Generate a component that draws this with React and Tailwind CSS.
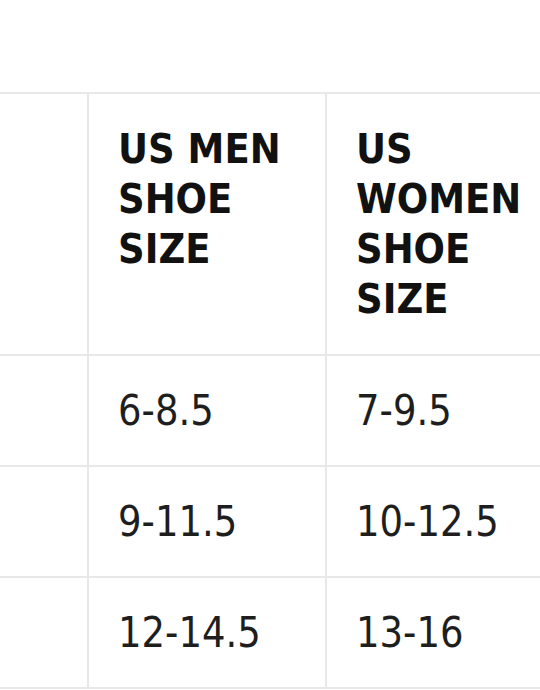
import React from 'react';

const rows = [
  ['6-8.5', '7-9.5'],
  ['9-11.5', '10-12.5'],
  ['12-14.5', '13-16'],
];

const App = () => {
  return (
    <div className="w-[540px] h-[690px] overflow-hidden bg-white pt-[92px] font-['DejaVu_Sans',sans-serif]">
      <div className="grid grid-cols-[89px_238px_1fr] w-[560px] border-t-2 border-[#e8e8e8]">
        {/* header */}
        <div className="h-[262px] border-r-2 border-b-2 border-[#e8e8e8]" />
        <div className="h-[262px] border-r-2 border-b-2 border-[#e8e8e8] pl-[29px] pt-[30px] text-[37px] font-bold text-[#111]">
          <span className="inline-block origin-top scale-y-[1.11] leading-[45px]">
            US MEN<br />SHOE<br />SIZE
          </span>
        </div>
        <div className="h-[262px] border-b-2 border-[#e8e8e8] pl-[29px] pt-[30px] text-[37px] font-bold text-[#111]">
          <span className="inline-block origin-top scale-y-[1.11] leading-[45px]">
            US<br />WOMEN<br />SHOE<br />SIZE
          </span>
        </div>

        {rows.map(([men, women]) => (
          <React.Fragment key={men}>
            <div className="h-[111px] border-r-2 border-b-2 border-[#e8e8e8]" />
            <div className="h-[111px] flex items-center border-r-2 border-b-2 border-[#e8e8e8] pl-[29px] text-[37px] text-[#1e1e1e]">
              <span className="inline-block scale-y-[1.13]">{men}</span>
            </div>
            <div className="h-[111px] flex items-center border-b-2 border-[#e8e8e8] pl-[29px] text-[37px] text-[#1e1e1e]">
              <span className="inline-block scale-y-[1.13]">{women}</span>
            </div>
          </React.Fragment>
        ))}
      </div>
    </div>
  );
};

export default App;
